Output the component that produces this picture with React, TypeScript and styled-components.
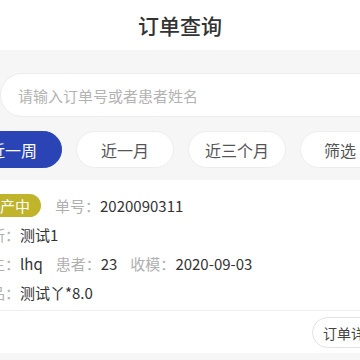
import React from "react";
import styled, { createGlobalStyle } from "styled-components";

const Global = createGlobalStyle`
  html, body { margin: 0; padding: 0; background: #f6f6f6; }
  body { font-family: "Noto Sans CJK SC", "Noto Sans", sans-serif; }
  #root { width: 360px; height: 360px; overflow: hidden; }
`;

const Viewport = styled.div`
  width: 360px;
  height: 360px;
  overflow: hidden;
  background: #f6f6f6;
  display: flex;
  flex-direction: column;
`;

const Header = styled.header`
  height: 50px;
  flex: none;
  background: #ffffff;
  display: flex;
  align-items: center;
  justify-content: center;
`;

const Title = styled.h1`
  margin: 0;
  font-size: 21px;
  font-weight: 500;
  color: #333333;
  letter-spacing: 0;
`;

const Shifted = styled.div`
  margin-left: -36px;
  width: 460px;
  flex: none;
  display: flex;
  flex-direction: column;
`;

const SearchBox = styled.div`
  margin: 23px 0 0 36px;
  height: 44px;
  width: 400px;
  box-sizing: border-box;
  background: #ffffff;
  border: 1px solid #ececec;
  border-radius: 22px;
  display: flex;
  align-items: center;
  padding-left: 17px;
  font-size: 15px;
  color: #b3b3b3;
`;

const Tabs = styled.div`
  margin-top: 14px;
  display: flex;
  gap: 14px;
`;

const Tab = styled.div<{ $active?: boolean }>`
  width: 98px;
  height: 37px;
  flex: none;
  box-sizing: border-box;
  border-radius: 19px;
  display: flex;
  align-items: center;
  justify-content: center;
  gap: 4px;
  font-size: 16px;
  background: ${(p) => (p.$active ? "#2a44b6" : "#ffffff")};
  color: ${(p) => (p.$active ? "#ffffff" : "#555555")};
  border: 1px solid ${(p) => (p.$active ? "#2a44b6" : "#ededed")};
`;

const Card = styled.section`
  margin-top: 12px;
  background: #ffffff;
  display: flex;
  flex-direction: column;
`;

const Info = styled.div`
  padding: 15px 0 8px 11px;
  display: flex;
  flex-direction: column;
  gap: 9px;
`;

const Row = styled.div`
  display: flex;
  align-items: center;
  height: 20px;
  font-size: 15px;
  color: #333333;
  white-space: nowrap;
`;

const Item = styled.span`
  margin-right: 13px;
  display: inline-flex;
`;

const Label = styled.span`
  color: #b0b0b0;
`;

const Badge = styled.span`
  height: 23px;
  padding: 0 11px 0 10px;
  margin-right: 14px;
  border-radius: 12px;
  background: #bfb42a;
  color: #ffffff;
  font-size: 15px;
  display: inline-flex;
  align-items: center;
`;

const Footer = styled.div`
  border-top: 1px solid #eeeeee;
  padding: 6px 0 5px 348px;
  display: flex;
`;

const DetailButton = styled.button`
  height: 31px;
  padding: 0 10px;
  border: 1px solid #e2e2e2;
  border-radius: 16px;
  background: #ffffff;
  color: #444444;
  font-family: inherit;
  font-size: 14px;
  white-space: nowrap;
`;

export default function App() {
  return (
    <Viewport>
      <Global />
      <Header>
        <Title>订单查询</Title>
      </Header>
      <Shifted>
        <SearchBox>请输入订单号或者患者姓名</SearchBox>
        <Tabs>
          <Tab $active>近一周</Tab>
          <Tab>近一月</Tab>
          <Tab>近三个月</Tab>
          <Tab>
            筛选
            <svg width="14" height="14" viewBox="0 0 14 14">
              <path d="M3 5l4 4 4-4" fill="none" stroke="#999" strokeWidth="1.4" />
            </svg>
          </Tab>
        </Tabs>
        <Card>
          <Info>
            <Row>
              <Badge>生产中</Badge>
              <Item>
                <Label>单号：</Label>2020090311
              </Item>
            </Row>
            <Row>
              <Item>
                <Label>诊所：</Label>测试1
              </Item>
            </Row>
            <Row>
              <Item>
                <Label>医生：</Label>lhq
              </Item>
              <Item>
                <Label>患者：</Label>23
              </Item>
              <Item>
                <Label>收模：</Label>2020-09-03
              </Item>
            </Row>
            <Row>
              <Item>
                <Label>产品：</Label>测试丫*8.0
              </Item>
            </Row>
          </Info>
          <Footer>
            <DetailButton>订单详情</DetailButton>
          </Footer>
        </Card>
      </Shifted>
    </Viewport>
  );
}
